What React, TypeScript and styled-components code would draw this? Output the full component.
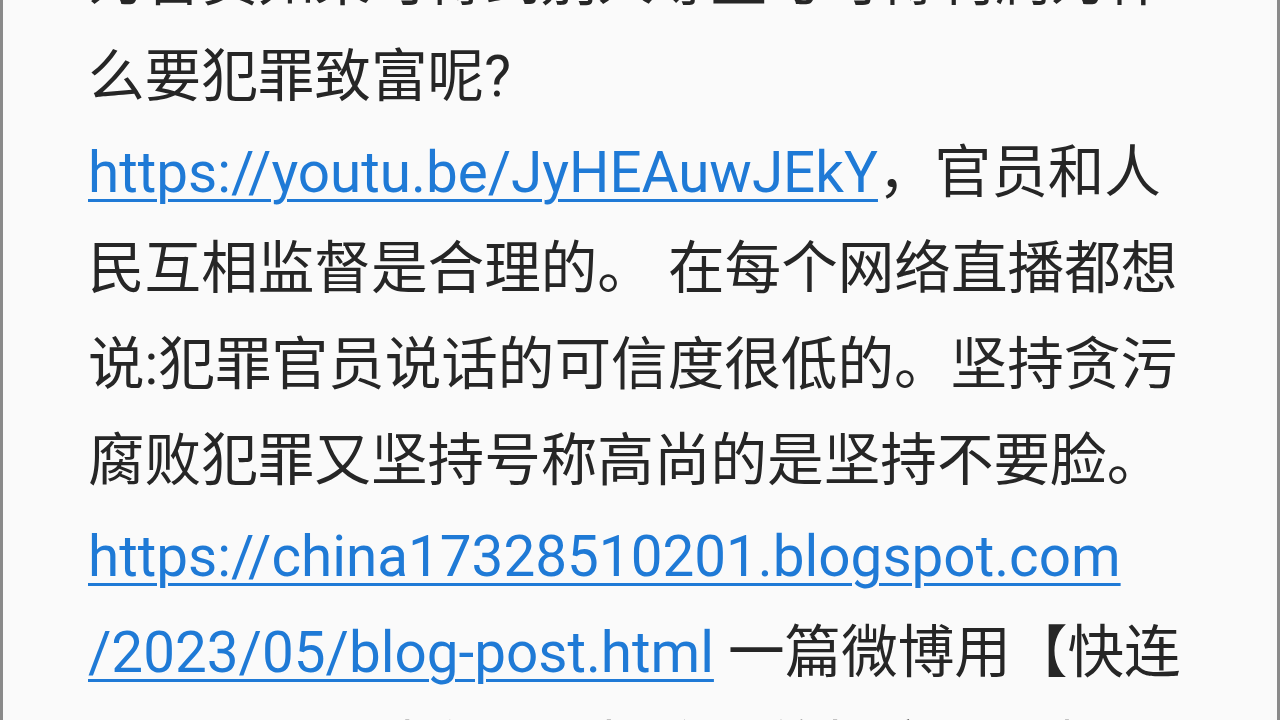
import React from 'react';
import styled, { createGlobalStyle } from 'styled-components';

const GlobalStyle = createGlobalStyle`
  html, body {
    margin: 0;
    padding: 0;
    background: #fafafa;
    overflow: hidden;
  }
`;

const Frame = styled.div`
  width: 1280px;
  height: 720px;
  box-sizing: border-box;
  background: #fafafa;
  border-left: 3px solid #8a8a8a;
  border-right: 3px solid #8a8a8a;
  overflow: hidden;
`;

const Text = styled.div`
  margin-top: -67px;
  padding-left: 85px;
  font-family: Roboto, "Noto Sans CJK SC", sans-serif;
  font-size: 56.6px;
  line-height: 96px;
  color: #262626;
`;

const Line = styled.div`
  white-space: nowrap;
`;

const Link = styled.a`
  color: #1f7ad6;
  text-decoration: underline;
  text-decoration-thickness: 2.5px;
  text-underline-offset: 7px;
`;

const App: React.FC = () => {
  return (
    <>
      <GlobalStyle />
      <Frame>
        <Text>
          <Line>为官员如果可得到别人尊重与可得利润为什</Line>
          <Line>么要犯罪致富呢?</Line>
          <Line>
            <Link href="#">https://youtu.be/JyHEAuwJEkY</Link>，官员和人
          </Line>
          <Line>民互相监督是合理的。 在每个网络直播都想</Line>
          <Line>说:犯罪官员说话的可信度很低的。坚持贪污</Line>
          <Line>腐败犯罪又坚持号称高尚的是坚持不要脸。</Line>
          <Line>
            <Link href="#">https://china17328510201.blogspot.com</Link>
          </Line>
          <Line>
            <Link href="#">/2023/05/blog-post.html</Link> 一篇微博用【快连
          </Line>
          <Line>加速器】翻墙在网上推广我的博客和视频</Line>
        </Text>
      </Frame>
    </>
  );
};

export default App;
